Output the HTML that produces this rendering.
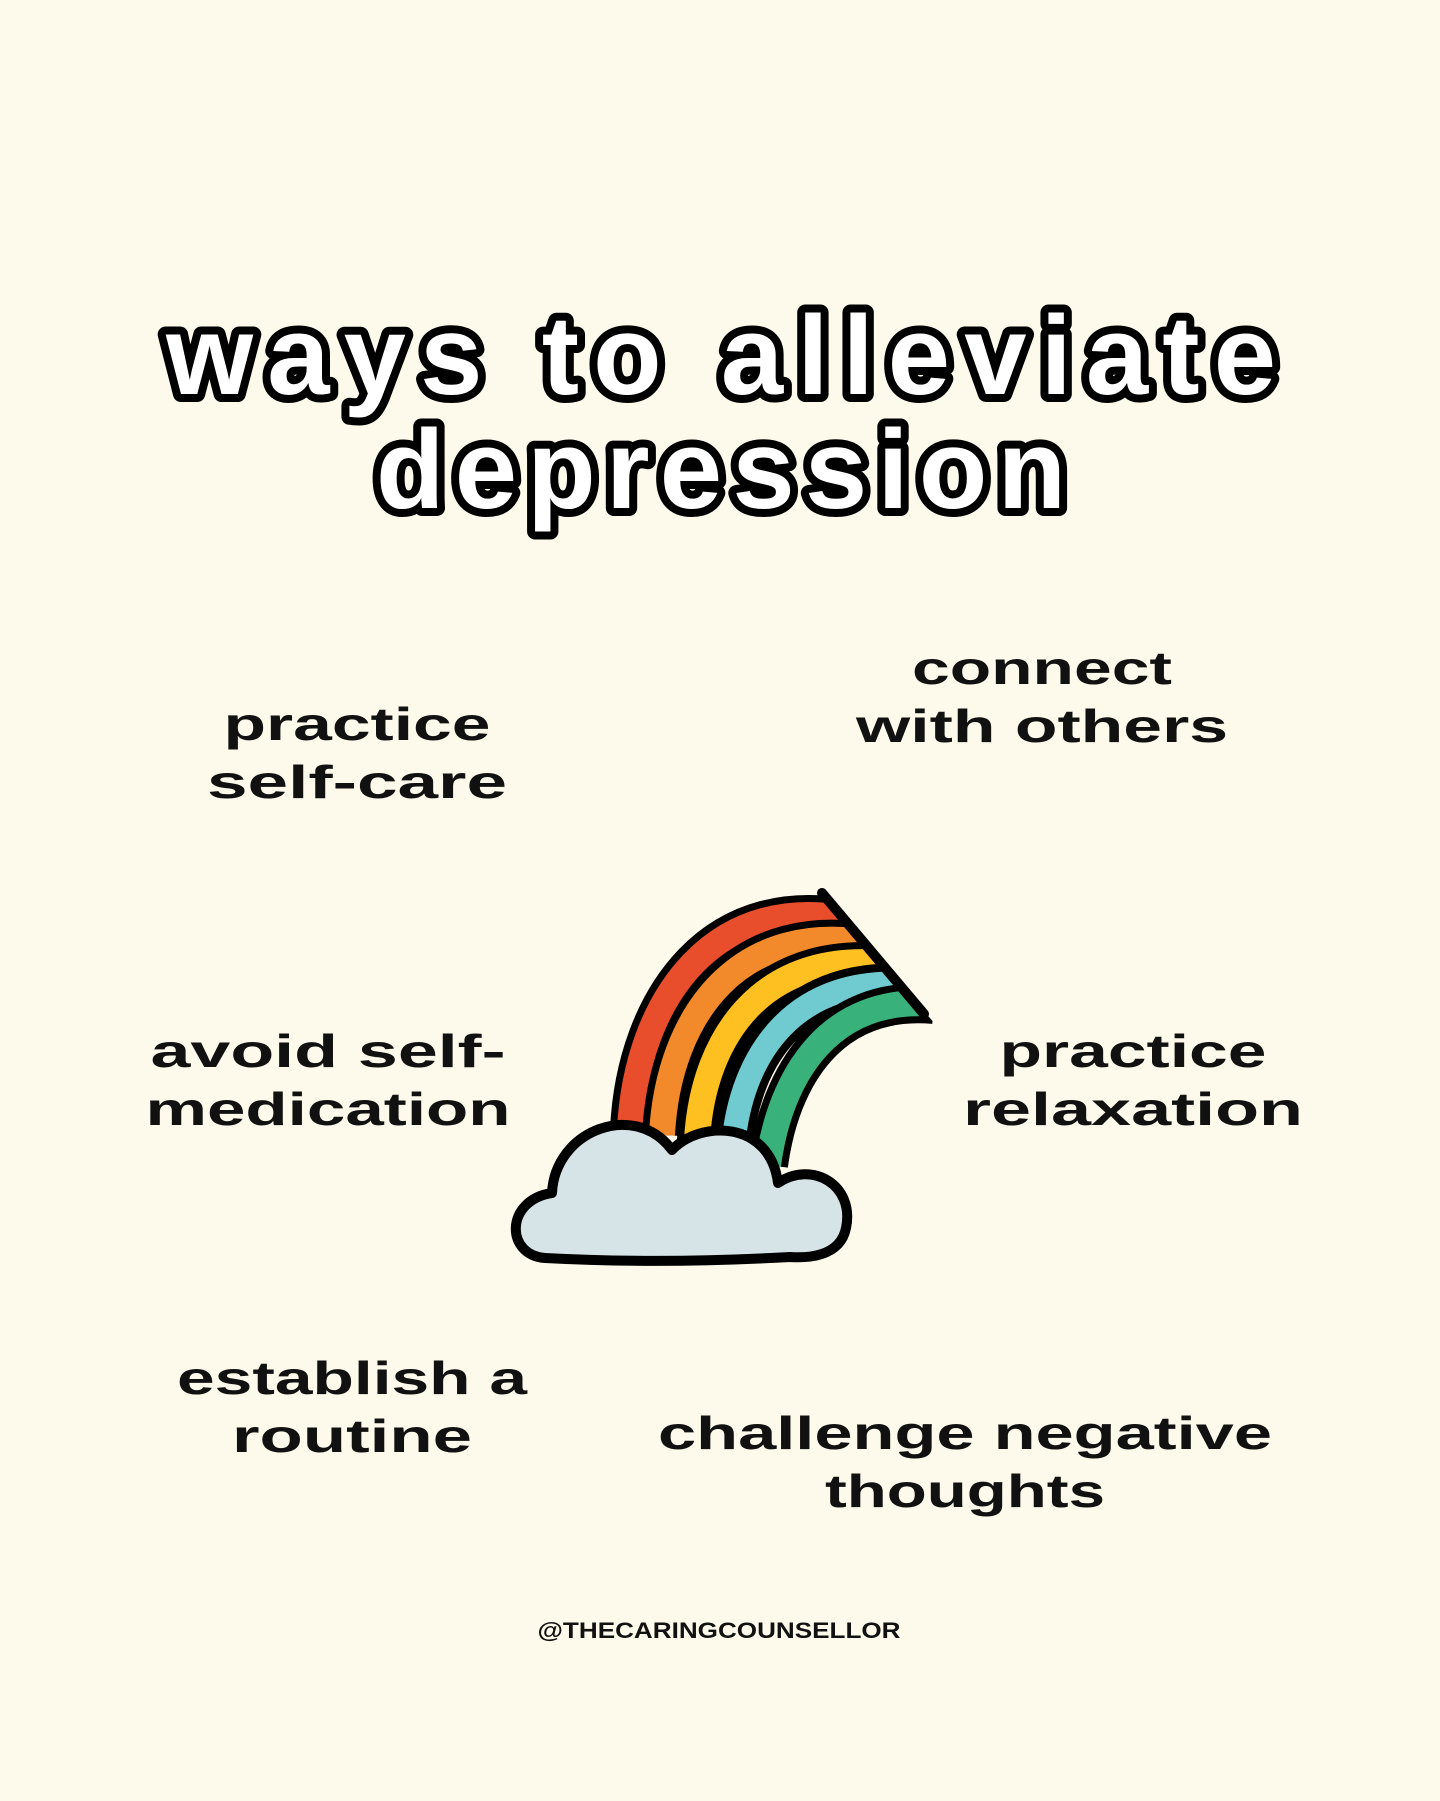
<!DOCTYPE html>
<html><head><meta charset="utf-8"><style>
html,body{margin:0;padding:0;background:#fdfaeb;}
svg{display:block}
</style></head><body>
<svg width="1440" height="1801" viewBox="0 0 1440 1801" xmlns="http://www.w3.org/2000/svg">
<defs><clipPath id="c"><polygon points="400,800 742,800 1173,1300 400,1300"/></clipPath></defs>
<rect width="1440" height="1801" fill="#fdfaeb"/>
<g font-family="Liberation Sans, DejaVu Sans, sans-serif" font-weight="bold" text-anchor="middle">
<text x="721" y="394" font-size="112" fill="#fff" stroke="#000" stroke-width="16" stroke-linejoin="round" paint-order="stroke" textLength="1110" lengthAdjust="spacing">ways to alleviate</text>
<text x="721" y="508" font-size="112" fill="#fff" stroke="#000" stroke-width="16" stroke-linejoin="round" paint-order="stroke" textLength="690" lengthAdjust="spacing">depression</text>
<g font-size="46" fill="#111">
<text x="357" y="740" textLength="267" lengthAdjust="spacingAndGlyphs">practice</text>
<text x="357" y="798" textLength="300" lengthAdjust="spacingAndGlyphs">self-care</text>
<text x="1042" y="684" textLength="260" lengthAdjust="spacingAndGlyphs">connect</text>
<text x="1042" y="742" textLength="372" lengthAdjust="spacingAndGlyphs">with others</text>
<text x="328" y="1067" textLength="355" lengthAdjust="spacingAndGlyphs">avoid self-</text>
<text x="328" y="1125" textLength="365" lengthAdjust="spacingAndGlyphs">medication</text>
<text x="1133" y="1067" textLength="267" lengthAdjust="spacingAndGlyphs">practice</text>
<text x="1133" y="1125" textLength="340" lengthAdjust="spacingAndGlyphs">relaxation</text>
<text x="352" y="1394" textLength="350" lengthAdjust="spacingAndGlyphs">establish a</text>
<text x="352" y="1452" textLength="240" lengthAdjust="spacingAndGlyphs">routine</text>
<text x="965" y="1449" textLength="614" lengthAdjust="spacingAndGlyphs">challenge negative</text>
<text x="965" y="1507" textLength="280" lengthAdjust="spacingAndGlyphs">thoughts</text>
</g>
<text x="719" y="1638" font-size="22" fill="#111" textLength="363" lengthAdjust="spacingAndGlyphs">@THECARINGCOUNSELLOR</text>
</g>
<g fill="none" stroke-linecap="butt" clip-path="url(#c)">
<path d="M630,1130 C636,1000 715,885 862,922" stroke="#000" stroke-width="40"/>
<path d="M630,1130 C636,1000 715,885 862,922" stroke="#e84e2c" stroke-width="26"/>
<path d="M662,1135 C668,1015 740,915 880,945" stroke="#000" stroke-width="40"/>
<path d="M662,1135 C668,1015 740,915 880,945" stroke="#f28a2b" stroke-width="26"/>
<path d="M697,1140 C703,1035 765,945 898,965" stroke="#000" stroke-width="40"/>
<path d="M697,1140 C703,1035 765,945 898,965" stroke="#fdc020" stroke-width="26"/>
<path d="M733,1148 C740,1055 795,972 916,985" stroke="#000" stroke-width="40"/>
<path d="M733,1148 C740,1055 795,972 916,985" stroke="#6fcbcf" stroke-width="24"/>
<path d="M768,1165 C780,1075 830,995 934,1004" stroke="#000" stroke-width="40"/>
<path d="M768,1165 C780,1075 830,995 934,1004" stroke="#38b27a" stroke-width="26"/>
</g>
<path d="M822,893 L924,1014" stroke="#000" stroke-width="10" stroke-linecap="round" fill="none"/>
<path d="M545,1258 C505,1255 505,1200 552,1193 C555,1130 635,1100 672,1150 C700,1120 770,1120 778,1183 C812,1160 855,1185 846,1228 C840,1258 805,1258 790,1257 C700,1262 620,1262 545,1258 Z" fill="#d6e4e7" stroke="#000" stroke-width="10" stroke-linejoin="round"/>
</svg>
</body></html>
